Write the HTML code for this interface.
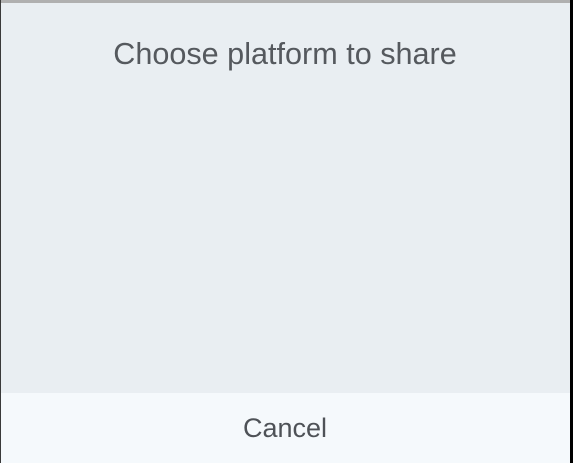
<!DOCTYPE html>
<html><head><meta charset="utf-8"><style>
html,body{margin:0;padding:0;width:573px;height:463px;overflow:hidden;background:#e9eef2;font-family:"Liberation Sans",sans-serif;}
.top{position:absolute;left:0;top:0;width:573px;height:3px;background:#b0b0b0;}
.l{position:absolute;left:0;top:0;width:1px;height:463px;background:#3a3a3a;}
.r{position:absolute;right:0;top:0;width:3px;height:463px;background:#000;}
.t{position:absolute;left:0;width:570px;top:37px;text-align:center;font-size:30.6px;color:#55595e;}
.c{position:absolute;left:1px;width:569px;top:393px;height:70px;background:#f5f9fc;}
.ct{position:absolute;left:0;width:570px;top:413px;text-align:center;font-size:27px;color:#4e5257;}
</style></head><body>
<div class="top"></div>
<div class="t">Choose platform to share</div>
<div class="c"></div>
<div class="ct">Cancel</div>
<div class="l"></div><div class="r"></div>
</body></html>
